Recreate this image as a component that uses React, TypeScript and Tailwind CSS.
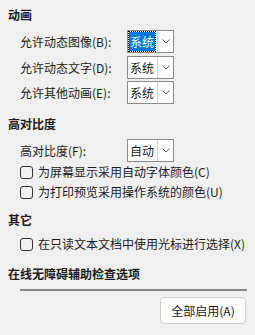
import React from "react";

const font = { fontFamily: '"Microsoft YaHei", "Noto Sans CJK SC", "Noto Sans", sans-serif' };

function Chevron() {
  return (
    <svg width="8" height="5" viewBox="0 0 8 5" className="block">
      <path d="M0.5 0.5 L4 4 L7.5 0.5" fill="none" stroke="#606060" strokeWidth="1" />
    </svg>
  );
}

function Select({ value, focused }: { value: string; focused?: boolean }) {
  return (
    <div className="flex h-[23px] w-[47px] border border-[#8a8a8a] bg-white">
      <div className="flex flex-1 items-center pl-[1px]">
        <span
          className={
            focused
              ? "flex h-[19px] items-center bg-[#0078d7] px-[1px] leading-none text-white outline-1 outline-dotted outline-black"
              : "flex h-[19px] items-center px-[1px] leading-none"
          }
        >
          {value}
        </span>
      </div>
      <div className="flex w-[16px] items-center justify-center border-l border-[#d4d4d4]">
        <Chevron />
      </div>
    </div>
  );
}

function SelectRow({ label, value, focused, className }: { label: string; value: string; focused?: boolean; className?: string }) {
  return (
    <div className={"flex h-[23px] items-center pl-[20px] " + (className ?? "")}>
      <span className="w-[107px] leading-none">{label}</span>
      <Select value={value} focused={focused} />
    </div>
  );
}

function Check({ label, className }: { label: string; className?: string }) {
  return (
    <div className={"flex h-[16px] items-center pl-[20px] " + (className ?? "")}>
      <span className="h-[13px] w-[13px] rounded-[3px] border border-[#333] bg-[#f0f0f0]" />
      <span className="ml-[5px] leading-none">{label}</span>
    </div>
  );
}

export default function App() {
  return (
    <div className="h-[335px] w-[255px] overflow-hidden bg-[#f0f0f0] text-[12px] text-[#1a1a1a]" style={font}>
      <div className="pl-[8px] pt-[7px] font-bold leading-[16px]">动画</div>
      <SelectRow className="mt-[7px]" label="允许动态图像(B):" value="系统" focused />
      <SelectRow className="mt-[3px]" label="允许动态文字(D):" value="系统" />
      <SelectRow className="mt-[2px]" label="允许其他动画(E):" value="系统" />

      <div className="mt-[12px] pl-[8px] font-bold leading-[16px]">高对比度</div>
      <SelectRow className="mt-[7px]" label="高对比度(F):" value="自动" />
      <Check className="mt-[2px]" label="为屏幕显示采用自动字体颜色(C)" />
      <Check className="mt-[4px]" label="为打印预览采用操作系统的颜色(U)" />

      <div className="mt-[12px] pl-[8px] font-bold leading-[16px]">其它</div>
      <Check className="mt-[8px]" label="在只读文本文档中使用光标进行选择(X)" />

      <div className="mt-[14px] pl-[8px] font-bold leading-[16px]">在线无障碍辅助检查选项</div>
      <div className="ml-[20px] mr-[8px] mt-[7px] h-[2px] bg-[#8c8c8c]" />
      <div className="mt-[6px] flex justify-end pr-[9px]">
        <button className="h-[27px] w-[86px] rounded-[4px] border border-[#d0d0d0] bg-[#fdfdfd] text-[12px] text-[#1a1a1a]">
          全部启用(A)
        </button>
      </div>
    </div>
  );
}
